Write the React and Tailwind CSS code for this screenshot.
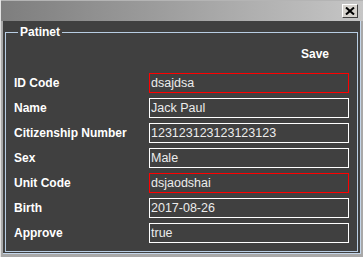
const fields = [
  { label: "ID Code", value: "dsajdsa", error: true },
  { label: "Name", value: "Jack Paul" },
  { label: "Citizenship Number", value: "123123123123123123" },
  { label: "Sex", value: "Male" },
  { label: "Unit Code", value: "dsjaodshai", error: true },
  { label: "Birth", value: "2017-08-26" },
  { label: "Approve", value: "true" },
];

export default function App() {
  return (
    <div
      className="w-[363px] h-[257px] flex flex-col bg-[#a8a8a8] border-l border-[#e2e2e2] overflow-hidden"
      style={{ fontFamily: '"Liberation Sans", Arial, sans-serif' }}
    >
      {/* title bar */}
      <div className="h-[21px] shrink-0 flex items-center justify-end pr-[5px] bg-gradient-to-r from-[#7e7e7e] to-[#c6c6c6] border-t border-[#b4b4b4]">
        <button className="w-[16px] h-[14px] flex items-center justify-center bg-[#d6d3ce] border border-t-white border-l-white border-r-[#404040] border-b-[#404040]">
          <svg width="10" height="8" viewBox="0 0 10 8">
            <path d="M1 0.5 L9 7.5 M9 0.5 L1 7.5" stroke="#000" strokeWidth="2" />
          </svg>
        </button>
      </div>

      {/* body */}
      <div className="flex-1 flex px-[2px] pb-[3px]">
        <div className="flex-1 flex bg-[#404040] border-r border-b border-[#c4d6ea] pl-[2px] pr-[2px] pt-[4px] pb-[1px]">
          <fieldset className="flex-1 border border-[#b8cde3] pl-[8px] pr-[6px]">
            <legend className="ml-[4px] px-[2px] text-[12px] leading-[14px] font-bold text-white">
              Patinet
            </legend>

            <div className="flex justify-end pr-[22px] pt-[8px] h-[34px]">
              <span className="text-[12px] leading-[14px] font-bold text-white">Save</span>
            </div>

            <div className="flex flex-col gap-[5px]">
              {fields.map((f) => (
                <div key={f.label} className="flex items-center h-[20px]">
                  <span className="w-[135px] text-[12px] font-bold text-white">{f.label}</span>
                  {f.error ? (
                    <div className="w-[200px] h-[20px] flex items-center pl-[1px] text-[12.5px] text-[#ececec] border border-solid border-[#ff0000]">
                      {f.value}
                    </div>
                  ) : (
                    <div className="w-[200px] h-[20px] flex items-center pl-[1px] text-[12.5px] text-[#ececec] border border-solid border-white">
                      {f.value}
                    </div>
                  )}
                </div>
              ))}
            </div>
          </fieldset>
        </div>
      </div>
    </div>
  );
}
